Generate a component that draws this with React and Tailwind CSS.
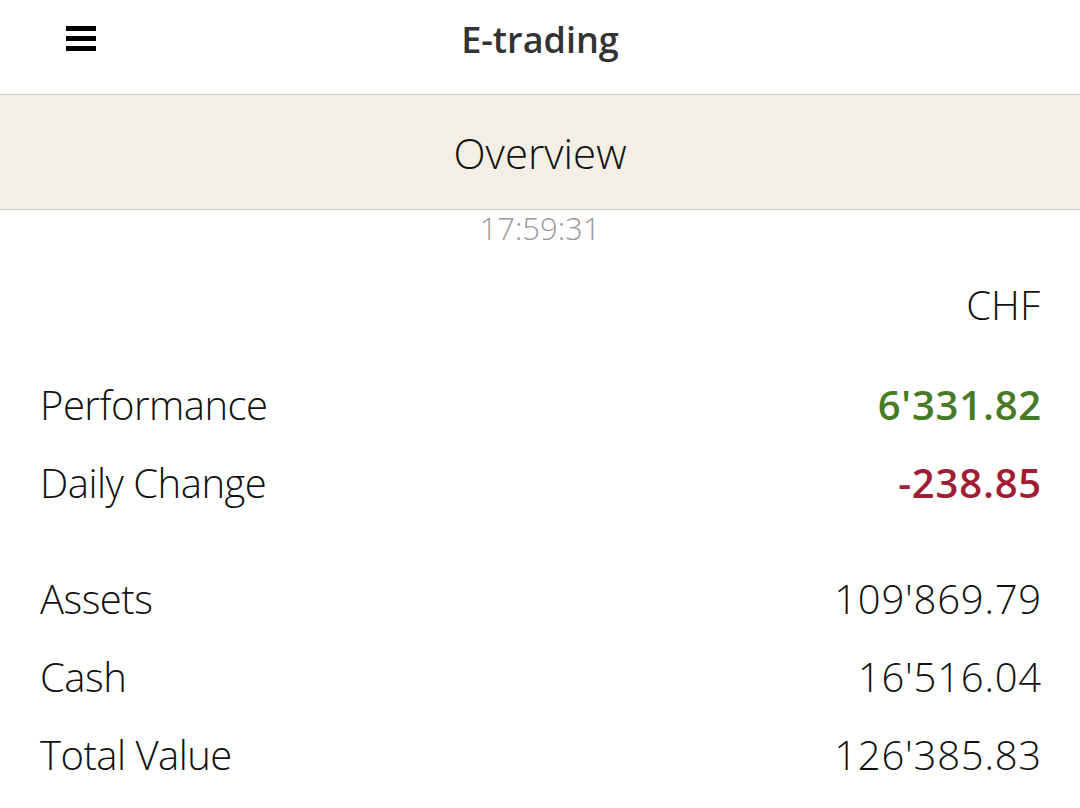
const rows = [
  { label: "Performance", value: "6'331.82", tone: "text-[#467a26] font-semibold" },
  { label: "Daily Change", value: "-238.85", tone: "text-[#a11d33] font-semibold" },
];

const totals = [
  { label: "Assets", value: "109'869.79" },
  { label: "Cash", value: "16'516.04" },
  { label: "Total Value", value: "126'385.83" },
];

const Row = ({ label, value, tone = "text-[#111] font-light" }) => (
  <div className="flex justify-between items-center h-[78px]">
    <span className="font-light tracking-[-0.5px]">{label}</span>
    <span className={`${tone} tracking-[0.8px] mr-[-2px]`}>{value}</span>
  </div>
);

export default function App() {
  return (
    <div className="min-h-screen bg-white text-[#111] font-['Open_Sans',sans-serif] w-[1080px] h-[808px] overflow-hidden">
      <header className="relative h-[94px] flex justify-center">
        <button className="absolute left-[66px] top-[26px] w-[30px] flex flex-col gap-[5px]">
          <span className="block h-[5px] bg-black" />
          <span className="block h-[5px] bg-black" />
          <span className="block h-[5px] bg-black" />
        </button>
        <h1 className="mt-[16px] text-[36px] leading-[48px] font-semibold text-[#333]">E-trading</h1>
      </header>

      <div className="h-[116px] bg-[#f3efe5] border-y border-[#c4c2bc] flex items-center justify-center">
        <h2 className="text-[42px] font-light">Overview</h2>
      </div>

      <p className="text-center text-[31px] leading-[36px] font-light text-[#9a9a9a]">17:59:31</p>

      <div className="px-[40px] text-[40px] leading-[50px]">
        <div className="flex justify-end mt-[34px] mb-[36px]">
          <span className="font-light">CHF</span>
        </div>
        {rows.map((r) => (
          <Row key={r.label} {...r} />
        ))}
        <div className="h-[38px]" />
        {totals.map((r) => (
          <Row key={r.label} {...r} />
        ))}
      </div>
    </div>
  );
}
